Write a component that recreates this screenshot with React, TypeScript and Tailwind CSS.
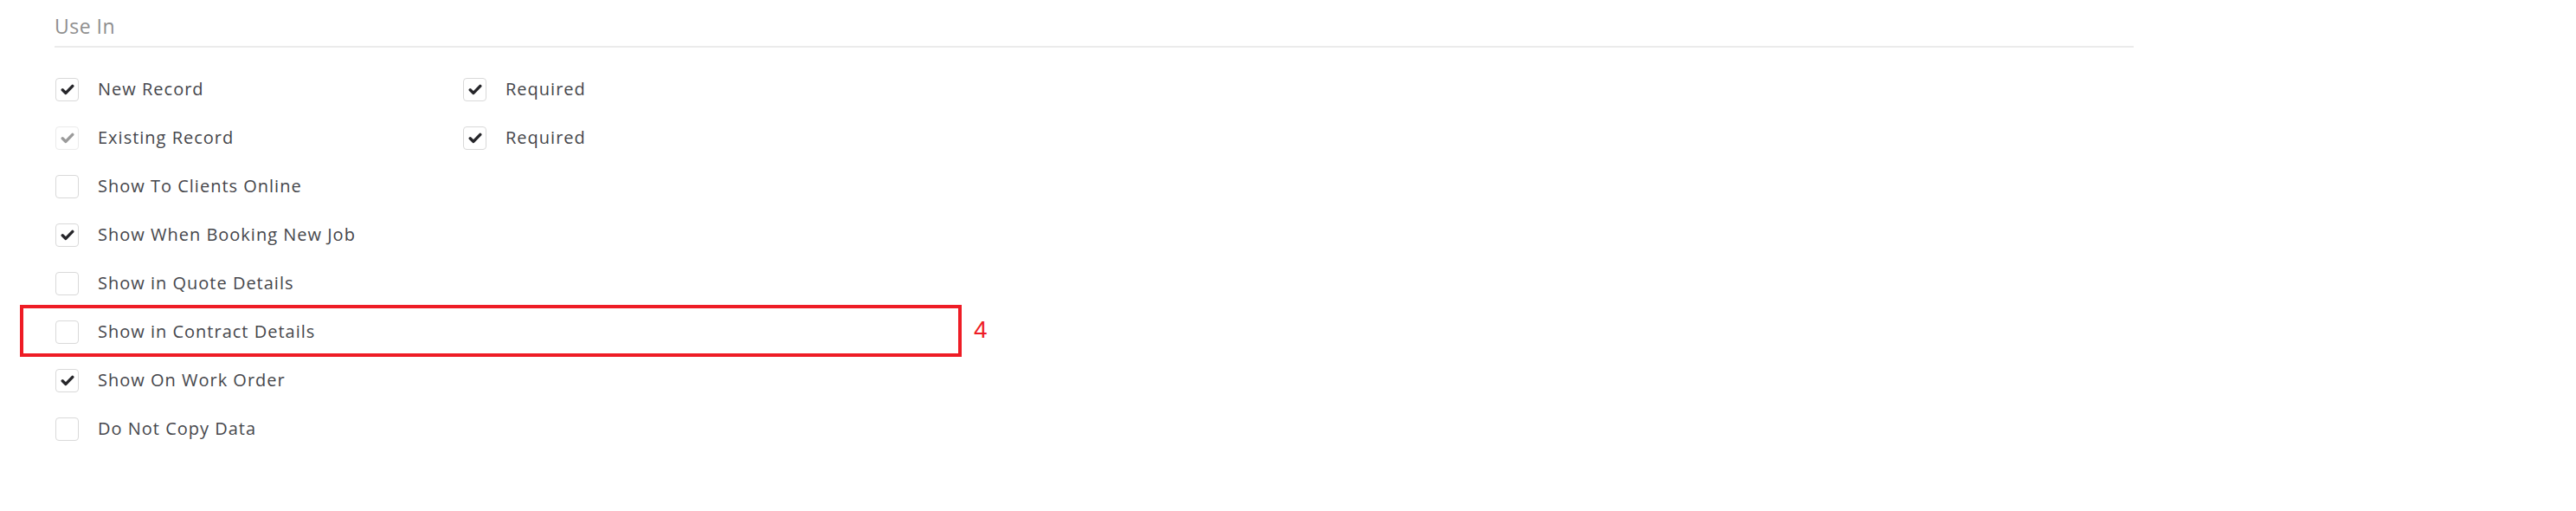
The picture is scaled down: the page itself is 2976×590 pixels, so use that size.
import React from "react";

type Opt = { label: string; checked: boolean; disabled?: boolean; required?: boolean };

const options: Opt[] = [
  { label: "New Record", checked: true, required: true },
  { label: "Existing Record", checked: true, disabled: true, required: true },
  { label: "Show To Clients Online", checked: false },
  { label: "Show When Booking New Job", checked: true },
  { label: "Show in Quote Details", checked: false },
  { label: "Show in Contract Details", checked: false },
  { label: "Show On Work Order", checked: true },
  { label: "Do Not Copy Data", checked: false },
];

function Check({ checked, disabled }: { checked: boolean; disabled?: boolean }) {
  return (
    <span
      className={
        "flex h-[27px] w-[27px] shrink-0 items-center justify-center rounded-[4px] border bg-white " +
        (disabled ? "border-[#ebebeb]" : "border-[#d9d9d9]")
      }
    >
      {checked && (
        <svg width="16" height="13" viewBox="0 0 16 13" fill="none">
          <path
            d="M2.2 6.8 L6 10.4 L13.8 2.4"
            stroke={disabled ? "#9b9b9b" : "#26262a"}
            strokeWidth="3.4"
            strokeLinecap="round"
            strokeLinejoin="round"
          />
        </svg>
      )}
    </span>
  );
}

export default function App() {
  return (
    <main className="min-h-[590px] w-full bg-white font-['Open_Sans',sans-serif]">
      <div className="relative w-[2465px] pl-[63px] pt-[15px]">
        <h2 className="text-[23px] leading-[30px] text-[#8e8e8e] tracking-[0.5px]">Use In</h2>
        <div className="mt-[8px] h-[2px] bg-[#ebebeb]" />

        <ul className="mt-[20px]">
          {options.map((o) => (
            <li key={o.label} className="flex h-[56px] items-center">
              <div className="flex w-[472px] items-center gap-[22px] pl-[1px]">
                <Check checked={o.checked} disabled={o.disabled} />
                <span className="text-[20px] tracking-[1px] text-[#45464b]">{o.label}</span>
              </div>
              {o.required && (
                <div className="flex items-center gap-[22px]">
                  <Check checked />
                  <span className="text-[20px] tracking-[1px] text-[#45464b]">Required</span>
                </div>
              )}
            </li>
          ))}
        </ul>

        {/* annotation */}
        <div className="absolute left-[23px] top-[352px] h-[60px] w-[1088px] border-[4px] border-[#ee1c25]" />
        <span className="absolute left-[1125px] top-[364px] text-[28px] leading-[34px] text-[#ee1c25] font-['Liberation_Sans',sans-serif]">
          4
        </span>
      </div>
    </main>
  );
}
